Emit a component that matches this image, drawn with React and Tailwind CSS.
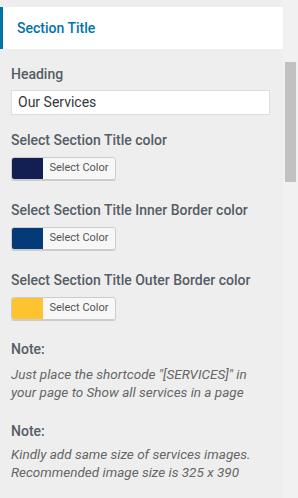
import React from "react";

// bloque de seleccion de color
function ColorPicker({ color }) {
  return (
    <div className="flex h-[23px] w-[105px] overflow-hidden rounded-[3px] border border-[#cccccc] shadow-[0_1px_0_#cccccc]">
      <span className="w-[31px] shrink-0" style={{ backgroundColor: color }} />
      <span className="flex flex-1 items-center justify-center bg-[#f7f7f7] text-[11px] text-[#555555]">
        Select Color
      </span>
    </div>
  );
}

function Label({ children, className = "" }) {
  return (
    <span className={"text-[14px] font-medium leading-[18px] text-[#555d66] " + className}>{children}</span>
  );
}

export default function App() {
  const colors = [
    { label: "Select Section Title color", color: "#131e52", mt: "mt-[16px]" },
    { label: "Select Section Title Inner Border color", color: "#053a78", mt: "mt-[21px]" },
    { label: "Select Section Title Outer Border color", color: "#fec42f", mt: "mt-[21px]" },
  ];

  return (
    <div
      className="flex h-[498px] w-[298px] overflow-hidden bg-[#eeeeee]"
      style={{ fontFamily: "Roboto, 'Liberation Sans', sans-serif" }}
    >
      <div className="flex w-[283px] flex-col pt-[7px]">
        {/* cabecera de la seccion */}
        <div className="flex h-[42px] items-center border-l-[3px] border-[#0073aa] bg-white pl-[14px]">
          <span className="text-[14px] font-medium text-[#0073aa]">Section Title</span>
        </div>

        <div className="flex flex-col px-[11px] pt-[16px]">
          <Label className="mb-[7px]">Heading</Label>
          <div className="flex h-[25px] w-[259px] items-center border border-[#dddddd] bg-white px-[6px] text-[14px] text-[#32373c]">
            Our Services
          </div>

          {colors.map((c) => (
            <div key={c.label} className={"flex flex-col " + c.mt}>
              <Label className="mb-[8px]">{c.label}</Label>
              <ColorPicker color={c.color} />
            </div>
          ))}

          <Label className="mt-[20px] mb-[7px]">Note:</Label>
          <p className="text-[13.5px] italic leading-[18px] text-[#666666]">
            Just place the shortcode "[SERVICES]" in your page to Show all services in a page
          </p>

          <Label className="mt-[21px] mb-[5px]">Note:</Label>
          <p className="text-[13.5px] italic leading-[18px] text-[#666666]">
            Kindly add same size of services images. Recommended image size is 325 x 390
          </p>
        </div>
      </div>

      {/* barra de scroll */}
      <div className="flex w-[15px] flex-col bg-[#f1f1f1] pt-[62px] pl-[2px]">
        <div className="h-[120px] w-[11px] bg-[#c1c1c1]" />
      </div>
    </div>
  );
}
